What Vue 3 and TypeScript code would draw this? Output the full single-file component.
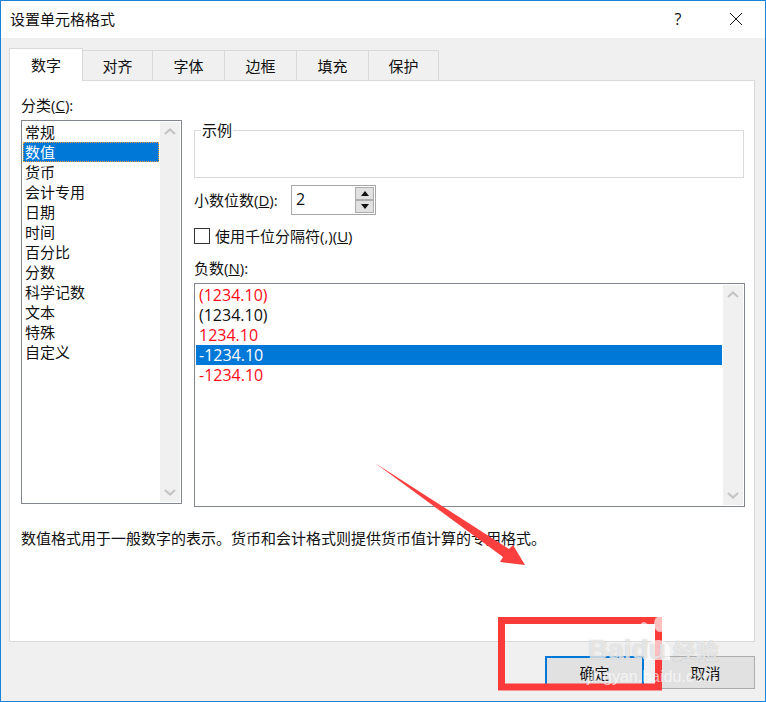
<script setup lang="ts">
interface Tab { label: string; width: number }
const tabs: Tab[] = [
  { label: '数字', width: 74 },
  { label: '对齐', width: 70 },
  { label: '字体', width: 72 },
  { label: '边框', width: 72 },
  { label: '填充', width: 72 },
  { label: '保护', width: 70 },
]
const categories = ['常规', '数值', '货币', '会计专用', '日期', '时间', '百分比', '分数', '科学记数', '文本', '特殊', '自定义']
const negatives = [
  { text: '(1234.10)', tone: 'red' },
  { text: '(1234.10)', tone: 'black' },
  { text: '1234.10', tone: 'red' },
  { text: '-1234.10', tone: 'selected' },
  { text: '-1234.10', tone: 'red' },
]
</script>

<template>
  <div class="dialog">
    <header class="titlebar">
      <span class="title">设置单元格格式</span>
      <span class="help">?</span>
      <svg class="close" width="14" height="14" viewBox="0 0 14 14">
        <path d="M1 1 L13 13 M13 1 L1 13" stroke="#111" stroke-width="1" fill="none" />
      </svg>
    </header>

    <nav class="tabs">
      <div
        v-for="(t, i) in tabs"
        :key="t.label"
        class="tab"
        :class="{ active: i === 0 }"
        :style="{ width: t.width + 'px' }"
      >{{ t.label }}</div>
    </nav>

    <section class="panel">
      <div class="columns">
        <div class="left">
          <div class="label">分类(<u>C</u>):</div>
          <div class="listbox category">
            <ul class="items">
              <li v-for="(c, i) in categories" :key="c" class="item" :class="{ selected: i === 1, focus: i === 1 }">{{ c }}</li>
            </ul>
            <div class="scrollbar">
              <svg width="20" height="20" viewBox="0 0 20 20"><path d="M5 12 L10 7.5 L15 12" class="chev" /></svg>
              <svg width="20" height="20" viewBox="0 0 20 20"><path d="M5 8 L10 12.5 L15 8" class="chev" /></svg>
            </div>
          </div>
        </div>

        <div class="right">
          <div class="group"><span class="legend">示例</span></div>
          <div class="decimals">
            <span class="decimals-label">小数位数(<u>D</u>):</span>
            <div class="spin-input">
              <span class="spin-value">2</span>
              <div class="spin-buttons">
                <div class="spin-btn"><i class="tri up"></i></div>
                <div class="spin-btn"><i class="tri down"></i></div>
              </div>
            </div>
          </div>
          <div class="check-row">
            <span class="checkbox"></span>
            <span>使用千位分隔符(,)(<u>U</u>)</span>
          </div>
          <div class="label neg-label">负数(<u>N</u>):</div>
          <div class="listbox negative">
            <ul class="items">
              <li v-for="(n, i) in negatives" :key="i" class="item" :class="n.tone === 'selected' ? 'selected' : n.tone">{{ n.text }}</li>
            </ul>
            <div class="scrollbar">
              <svg width="20" height="20" viewBox="0 0 20 20"><path d="M5 12 L10 7.5 L15 12" class="chev" /></svg>
              <svg width="20" height="20" viewBox="0 0 20 20"><path d="M5 8 L10 12.5 L15 8" class="chev" /></svg>
            </div>
          </div>
        </div>
      </div>
      <p class="desc">数值格式用于一般数字的表示。货币和会计格式则提供货币值计算的专用格式。</p>
    </section>

    <footer class="footer">
      <button class="btn primary">确定</button>
      <button class="btn">取消</button>
    </footer>

    <!-- screenshot annotations lying over the dialog -->
    <svg class="annotation" width="766" height="702" viewBox="0 0 766 702">
      <path d="M375 463 L509 549 L513 545 L525 565 L500 562 L503 557 Z" fill="#fb3f3f" />
      <rect x="501.5" y="620.5" width="157" height="66.5" fill="none" stroke="#fb3a3a" stroke-width="7" />
      <g fill="#ffffff" fill-opacity="0.68">
        <ellipse cx="660" cy="624" rx="6" ry="8" />
        <ellipse cx="645" cy="630" rx="5" ry="8" transform="rotate(-15 645 630)" />
        <ellipse cx="673" cy="633" rx="5" ry="8" transform="rotate(15 673 633)" />
        <path d="M646 650 C648 638 664 636 670 648 L670 660 L646 660 Z" />
      </g>
    </svg>
    <div class="wm-top"><span>Baidu</span><span class="wm-cn">经验</span></div>
    <div class="wm-url">jingyan.baidu.com</div>
  </div>
</template>

<style scoped>
.dialog {
  position: relative;
  width: 766px;
  height: 702px;
  box-sizing: border-box;
  border: 1px solid #1883d7;
  background: #f0f0f0;
  display: flex;
  flex-direction: column;
  overflow: hidden;
  font-family: "Open Sans", "Noto Sans CJK SC", sans-serif;
  font-size: 15px;
  line-height: 20px;
  color: #111;
}
.titlebar {
  box-sizing: border-box;
  height: 37px;
  background: #fff;
  display: flex;
  align-items: center;
  padding: 0 0 2px 9px;
  flex: none;
}
.title { flex: 1; }
.help {
  font-size: 16px;
  width: 14px;
  text-align: center;
  margin-right: 44px;
  margin-left: -6px;
}
.close { margin-right: 22px; }
.tabs {
  display: flex;
  align-items: flex-end;
  height: 32px;
  margin-top: 10px;
  padding-left: 8px;
  flex: none;
  position: relative;
  z-index: 1;
}
.tab {
  box-sizing: border-box;
  height: 30px;
  border: 1px solid #d9d9d9;
  border-left: none;
  border-bottom: none;
  background: #f0f0f0;
  text-align: center;
  line-height: 30px;
}
.tab.active {
  height: 33px;
  margin-bottom: -1px;
  border-left: 1px solid #d9d9d9;
  background: #fff;
  line-height: 33px;
}
.panel {
  box-sizing: border-box;
  width: 746px;
  height: 562px;
  margin-left: 8px;
  background: #fff;
  border: 1px solid #d9d9d9;
  flex: none;
}
.columns {
  display: grid;
  grid-template-columns: 161px 551px;
  column-gap: 12px;
  padding: 14px 0 0 11px;
}
.label { height: 20px; }
.listbox {
  box-sizing: border-box;
  border: 1px solid #82878f;
  padding: 1px;
  display: flex;
  background: #fff;
}
.category { height: 384px; margin-top: 5px; }
.items {
  flex: 1;
  margin: 0;
  padding: 0;
  list-style: none;
  min-width: 0;
}
.item {
  height: 20px;
  line-height: 20px;
  padding-left: 2px;
}
.selected {
  background: #0078d7;
  color: #fff;
}
.focus {
  box-sizing: border-box;
  outline: 1px dotted #f2a03d;
  outline-offset: -1px;
}
.red { color: #ff0b18; }
.black { color: #111; }
.scrollbar {
  width: 20px;
  margin-left: 1px;
  background: #f0f0f0;
  display: flex;
  flex-direction: column;
  justify-content: space-between;
  flex: none;
}
.chev {
  fill: none;
  stroke: #c4c4c4;
  stroke-width: 2.2;
}
.right { padding-top: 35px; }
.group {
  position: relative;
  box-sizing: border-box;
  width: 550px;
  height: 48px;
  border: 1px solid #d9d9d9;
}
.legend {
  position: absolute;
  left: 6px;
  top: -11px;
  padding: 0 1px;
  background: #fff;
}
.decimals {
  display: flex;
  align-items: center;
  margin-top: 7px;
  height: 30px;
}
.decimals-label { width: 97px; flex: none; }
.spin-input {
  box-sizing: border-box;
  width: 85px;
  height: 30px;
  border: 1px solid #a6a6a6;
  display: flex;
  align-items: center;
  justify-content: space-between;
  padding: 1px;
}
.spin-value {
  padding: 0 0 3px 3px;
  font-size: 16px;
}
.spin-buttons {
  width: 19px;
  height: 26px;
  display: flex;
  flex-direction: column;
  gap: 0;
}
.spin-btn {
  box-sizing: border-box;
  flex: 1;
  background: #e1e1e1;
  border: 1px solid #adadad;
  display: flex;
  align-items: center;
  justify-content: center;
}
.tri {
  width: 0;
  height: 0;
  border-left: 4px solid transparent;
  border-right: 4px solid transparent;
}
.tri.up { border-bottom: 5px solid #111; }
.tri.down { border-top: 5px solid #111; }
.check-row {
  display: flex;
  align-items: center;
  gap: 5px;
  margin-top: 13px;
  height: 16px;
}
.checkbox {
  box-sizing: border-box;
  width: 16px;
  height: 16px;
  border: 1px solid #333;
  background: #fff;
  flex: none;
}
.neg-label { margin-top: 14px; }
.negative { height: 224px; margin-top: 5px; }
.negative .item {
  padding-left: 3px;
  font-size: 16px;
  line-height: 20px;
}
.desc {
  margin: 21px 0 0 11px;
  height: 20px;
}
.footer {
  box-sizing: border-box;
  display: flex;
  gap: 12px;
  padding: 14px 0 0 544px;
}
.btn {
  box-sizing: border-box;
  width: 99px;
  height: 33px;
  border: 1px solid #adadad;
  background: #e1e1e1;
  font: inherit;
  color: #111;
  padding: 0;
}
.btn.primary { border: 2px solid #0078d7; }
.annotation {
  position: absolute;
  left: -1px;
  top: -1px;
  pointer-events: none;
}
.wm-top {
  position: absolute;
  left: 587px;
  top: 633px;
  display: flex;
  align-items: center;
  font-family: "Liberation Sans", sans-serif;
  font-size: 28px;
  font-weight: 700;
  line-height: 32px;
  color: rgba(255, 255, 255, 0.68);
  text-shadow: 0 0 1px rgba(130, 130, 130, 0.55);
}
.wm-cn {
  font-family: "Noto Sans CJK SC", sans-serif;
  font-size: 23px;
  margin-left: 7px;
}
.wm-url {
  position: absolute;
  left: 586px;
  top: 667px;
  font-family: "Liberation Sans", sans-serif;
  font-size: 16px;
  line-height: 18px;
  color: rgba(255, 255, 255, 0.65);
}
</style>
